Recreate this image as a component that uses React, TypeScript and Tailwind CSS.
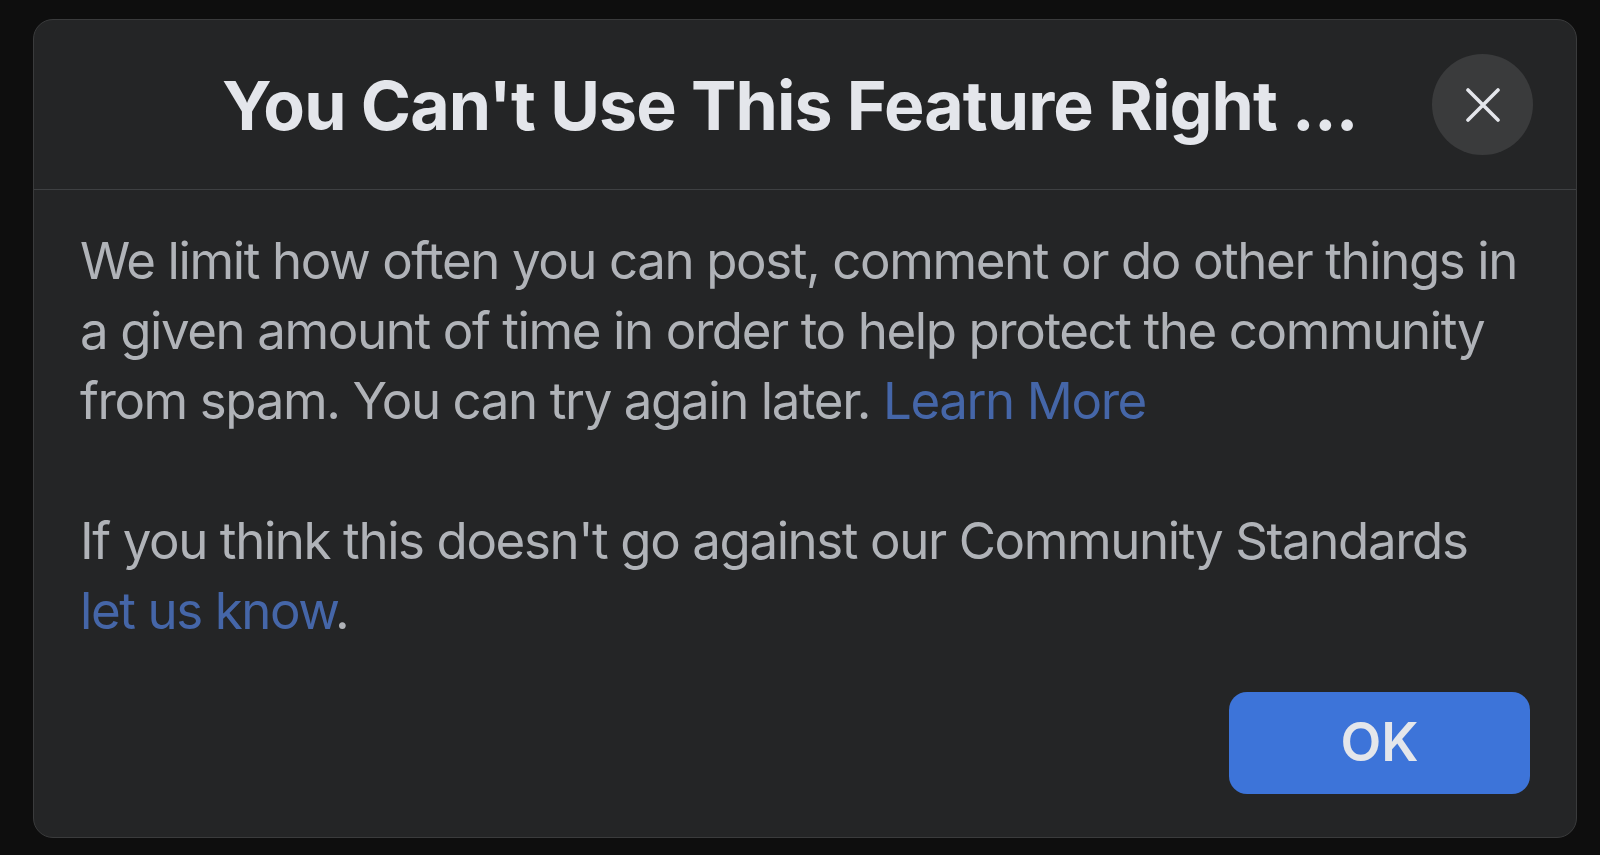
import React from "react";

export default function App() {
  return (
    <div className="w-[1600px] h-[855px] bg-[#0e0e0e] overflow-hidden pt-[19px] pl-[33px]" style={{ fontFamily: "Inter, 'Noto Sans', sans-serif" }}>
      <div className="w-[1544px] h-[819px] rounded-[20px] border border-[#3a3b3c] bg-[#242526] flex flex-col">
        <div className="h-[170px] flex items-center border-b border-[#3e4042] pl-[188px] pr-[43px]">
          <h1 className="flex-1 text-[68px] font-bold text-[#e4e6eb] whitespace-nowrap leading-none tracking-[-0.9px]">
            You Can't Use This Feature Right ...
          </h1>
          <button className="w-[101px] h-[101px] rounded-full bg-[#3a3b3c] flex items-center justify-center">
            <svg width="34" height="34" viewBox="0 0 34 34" fill="none" stroke="#e4e6eb" strokeWidth="3.6" strokeLinecap="round">
              <path d="M2 2 L32 32 M32 2 L2 32" />
            </svg>
          </button>
        </div>
        <div className="flex-1 flex flex-col px-[46px] pt-[36px] pb-[43px]">
          <p className="text-[51px] leading-[70px] tracking-[-1.4px] text-[#b0b3b8]">
            We limit how often you can post, comment or do other things in a given amount of time in order to help protect the community from spam. You can try again later.{" "}
            <span className="text-[#4566a8]">Learn More</span>
            <br />
            <br />
            If you think this doesn't go against our Community Standards{" "}
            <span className="text-[#4566a8]">let us know</span>.
          </p>
          <div className="flex-1" />
          <div className="flex justify-end">
            <button className="w-[301px] h-[102px] rounded-[18px] bg-[#3d74d9] text-[#e4e6eb] text-[53px] font-semibold">
              OK
            </button>
          </div>
        </div>
      </div>
    </div>
  );
}
